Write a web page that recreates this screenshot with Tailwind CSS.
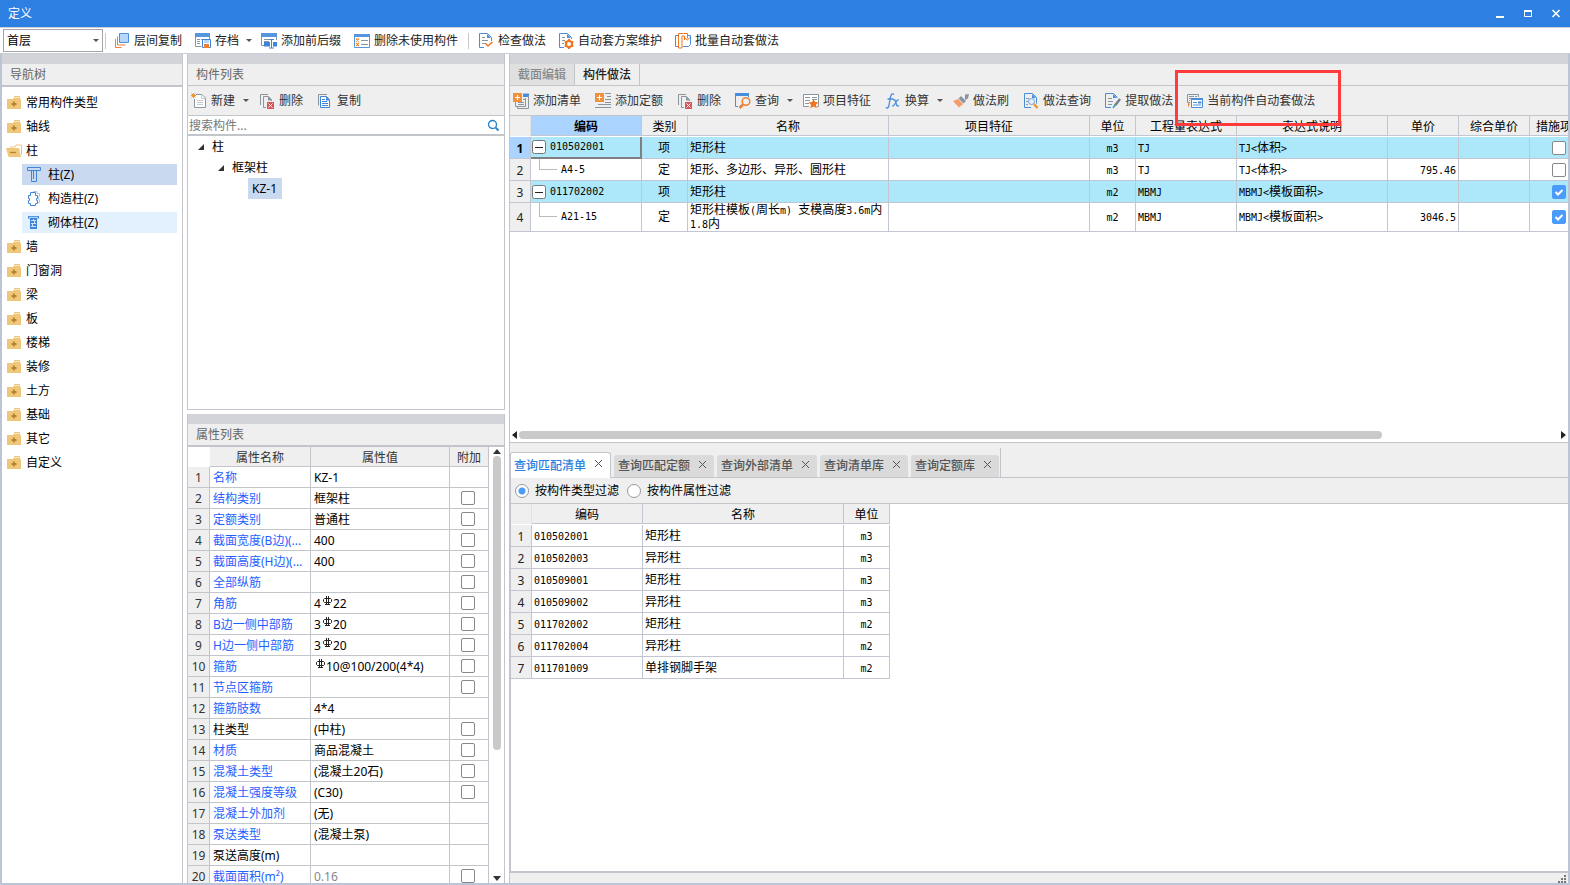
<!DOCTYPE html>
<html lang="zh-CN">
<head>
<meta charset="utf-8">
<title>定义</title>
<script src="https://cdn.jsdelivr.net/npm/@tailwindcss/browser@4"></script>
</head>
<body class="h-screen flex flex-col overflow-hidden bg-white text-black text-xs leading-4 font-['Noto_Sans','Noto_Sans_CJK_SC',sans-serif]">

<svg class="hidden" aria-hidden="true">
  <symbol id="i-floor" viewBox="0 0 16 16"><path d="M5.500 .5h9v9h-9z" fill="#b6d6fb" stroke="#4a90dc"/><path d="M3.500 3.500v8.500h8M1.500 6v8.500h6" fill="none" stroke="#ee7f35"/></symbol>
  <symbol id="i-save" viewBox="0 0 16 16"><path d="M0 0h15v4H0z" fill="#5596e0"/><path d="M.5 4v9.500h6M14.500 4v2" fill="none" stroke="#8b959d"/><path d="M2 6.500h3m1 0h6M2 8.500h3M2 10.500h3" stroke="#8b959d"/><path d="M7.500 6.500h8v8h-8z" fill="#fff" stroke="#3d85d8"/><path d="M9 7h5v3H9z" fill="#b8d4f6"/><path d="M9 11h5v4H9z" fill="#ee7f35"/></symbol>
  <symbol id="i-affix" viewBox="0 0 16 16"><path d="M0 0h16v4H0z" fill="#5596e0"/><path d="M.5 4v8.500H3M15.500 4v3" fill="none" stroke="#8b959d"/><path d="M3 6.500h5M3 8.500h5" stroke="#8b959d"/><path d="M3 9h6v4.500H3zm9 0h4v4.500h-4z" fill="#3d85d8"/><path d="M8 6.500h5M8 15h5M10.500 6.500v8.500" stroke="#3d85d8"/></symbol>
  <symbol id="i-unused" viewBox="0 0 16 16"><path d="M0 1h16v3H0z" fill="#5596e0"/><path d="M.5 3v11.500h15V3" fill="none" stroke="#5596e0"/><path d="M2 5.500l3 3m0-3l-3 3m0 1.500l3 3m0-3l-3 3" stroke="#f08b2c" stroke-width="1.200"/><path d="M7 7.500h7M7 11.500h7" stroke="#8b959d"/></symbol>
  <symbol id="i-check" viewBox="0 0 16 16"><path d="M6 14.500H1.500V.5h8l4 4V8" fill="none" stroke="#4a8edb"/><path d="M9 1v4h4z" fill="#4a8edb"/><path d="M4 4.500h3M4 7.500h6M4 10.500h4" stroke="#8b959d"/><path d="M7.500 10.500l2.500 2.500L14.500 9" fill="none" stroke="#ee7623" stroke-width="1.600"/></symbol>
  <symbol id="i-gear" viewBox="0 0 16 16"><path d="M6 14.500H1.500V.5h8l4 4V6" fill="none" stroke="#4a8edb"/><path d="M9 1v4h4z" fill="#4a8edb"/><path d="M4 4.500h3M4 7.500h3M4 10.500h2" stroke="#8b959d"/><circle cx="11" cy="11" r="3" fill="none" stroke="#ee7623" stroke-width="2"/><path d="M11 6v2m0 6v2M6.700 8.500l1.700 1m5.200 3l1.700 1M6.700 13.500l1.700-1m5.200-3l1.700-1" stroke="#ee7623" stroke-width="2"/></symbol>
  <symbol id="i-batch" viewBox="0 0 16 16"><path d="M3 2.500H.5v11H3M12 2.500h3.500v9l-2 2H8" fill="none" stroke="#4a8edb"/><path d="M8.500 .5H3.500v14.500h3.500v-12h2.500v4M8.500 .5h4v5M9.500 4.500l2.800 2.500 2.700-2.500" fill="none" stroke="#ee7623"/></symbol>
  <symbol id="i-new" viewBox="0 0 16 16"><path d="M5 1.500h6l3.500 3.500v9.500h-11V6" fill="#fff" stroke="#8b959d"/><path d="M10.500 1.500v4h4M6 7.500h6M6 9.500h6M6 11.500h6" fill="none" stroke="#c5cace"/><path d="M.5 .5l4 4m0-4l-4 4M2.500 0v5M0 2.500h5" stroke="#f0952e"/></symbol>
  <symbol id="i-del" viewBox="0 0 16 16"><path d="M1.500 12V1.500H9M7 14.500H4.500v-11h5l3 3V8" fill="none" stroke="#8b959d"/><path d="M9 3.500l4 4H9z" fill="#8b959d"/><path d="M8 9h7v7H8z" fill="#d9535b"/><path d="M9.500 10.500l4 4m0-4l-4 4" stroke="#fff"/></symbol>
  <symbol id="i-copy" viewBox="0 0 16 16"><path d="M1.500 12.500V1.500H10" fill="none" stroke="#8b959d"/><path d="M3.500 3.500h6l3 3v8h-9z" fill="#fff" stroke="#3f86d8"/><path d="M9 3.500v4h4z" fill="#3f86d8"/><path d="M5 6.500h3M5 8.500h5M5 10.500h6M5 12.500h6" stroke="#3f86d8"/></symbol>
  <symbol id="i-addlist" viewBox="0 0 16 16"><path d="M10 .5h6V4h-6z" fill="#4a8edb"/><path d="M15.500 3v12.500H4.500v-2M2.500 9v4.500h10V5" fill="none" stroke="#8b959d"/><path d="M10 6.500h2M5 9.500h6M5 11.500h6" stroke="#8b959d"/><path d="M0 0h9v9H0z" fill="#ee9240"/><path d="M2 4.500h5M4.500 2v5" stroke="#fff"/></symbol>
  <symbol id="i-addquota" viewBox="0 0 16 16"><path d="M10 .5h6M12 3.500h4M10 6.500h6M10 9.500h6M3 11.500h13M0 14.500h16" stroke="#8b959d"/><path d="M0 0h9v9H0z" fill="#ee9240"/><path d="M2 4.500h5M4.500 2v5" stroke="#fff"/></symbol>
  <symbol id="i-query" viewBox="0 0 16 16"><path d="M0 0h14v3H0z" fill="#4a8edb"/><path d="M.5 3v10.500H3M13.500 2v2" fill="none" stroke="#4a8edb"/><circle cx="11" cy="8.500" r="3.800" fill="#f1f1f1" stroke="#ee7f35" stroke-width="1.500"/><path d="M8 11.500L4.500 15" stroke="#ee7f35" stroke-width="2.500"/></symbol>
  <symbol id="i-feature" viewBox="0 0 16 16"><path d="M6 13.500H.5v-12h15v12H14" fill="#fff" stroke="#8b959d"/><path d="M2 4.500h5M9 4.500h5M2 7.500h5M2 10.500h4M9 6.500h5" stroke="#8b959d"/><path d="M10.500 6l1.500 3 3.500.3-2.500 2.400.8 3.500-3.300-1.800-3.200 1.800.7-3.500L5.500 9.300 9 9z" fill="#ee7623"/></symbol>
  <symbol id="i-fx" viewBox="0 0 16 16"><path d="M9 1.500Q6.500-.5 5.500 4L3.800 13Q3 16 .8 14.500M2.500 6h6M8 7q2-1 2.500 1.500l1 3q.5 2.500 2.500 1M13.800 7q-1.800-.5-3.300 3-1.500 3-3.300 3" fill="none" stroke="#4a8edb" stroke-width="1.300"/></symbol>
  <symbol id="i-brush" viewBox="0 0 16 16"><path d="M12 1.500l4-.5-1 4.500-3 1.500zM8 3l5 5-2.500 2.500-5-5z" fill="#8b959d"/><path d="M5 6l5 5-4 3.500L0 8z" fill="#f59a6a"/></symbol>
  <symbol id="i-docquery" viewBox="0 0 16 16"><path d="M8 14.500H1.500V.5h8l4 4v6" fill="none" stroke="#4a8edb"/><path d="M9 1v4h4z" fill="#4a8edb"/><path d="M3 5.500h3M3 8.500h2M3 11.500h2" stroke="#8b959d"/><circle cx="8.500" cy="8.500" r="3" fill="#e8effa" stroke="#6f9fdd"/><path d="M11 11l3.500 4" stroke="#ee9a2f" stroke-width="2.500"/></symbol>
  <symbol id="i-extract" viewBox="0 0 16 16"><path d="M6 14.500H.5V.5h8l4 4" fill="none" stroke="#4a8edb"/><path d="M8 1v4h4z" fill="#4a8edb"/><path d="M3 5.500h4M3 8.500h5M3 11.500h4" stroke="#8b959d"/><path d="M15 6l-5 6.500" stroke="#73808a" stroke-width="2.500"/><path d="M10 12l-2 3" stroke="#39a2b5" stroke-width="1.500"/></symbol>
  <symbol id="i-auto" viewBox="0 0 16 16"><path d="M3 9.500H.5v-8h11V4M2 3.500h5M8 3.500h2M2 5.500h2M2 7.500h1" fill="none" stroke="#8b959d"/><path d="M1.500 10.500v3M1 11h2" stroke="#ee7f35"/><path d="M4.500 5.500h11v9h-11z" fill="#fff" stroke="#4a8edb"/><path d="M4 5h12v2H4z" fill="#4a8edb"/><path d="M6 9.500h4M6 12h8" stroke="#4a8edb"/><path d="M11 8.500h3.500v2H11z" fill="#4a8edb"/></symbol>
  <symbol id="i-folder" viewBox="0 0 16 16"><path d="M8 1h6v1H8zM1 4h6l1-1.500h6V4h1v10H1z" fill="#efc77c"/><path d="M8 6.500v5M5.500 9h5" stroke="#b5852b" stroke-width="1.800"/></symbol>
  <symbol id="i-folder-open" viewBox="0 0 16 16"><path d="M4 4h5l1-2h5.500v10" fill="none" stroke="#efc77c"/><path d="M0 5h13l2 9H2.500z" fill="#efc77c"/><path d="M4 9.500h6" stroke="#b5852b" stroke-width="1.300"/></symbol>
  <symbol id="i-col" viewBox="0 0 16 16"><path d="M1.500 .5h13v3h-13zM5.500 3.500v11h5v-11M7.500 3.500v8.500" fill="none" stroke="#3f86d8"/></symbol>
  <symbol id="i-gz" viewBox="0 0 16 16"><path d="M7 .5h4v2h2.500v3h-1v3h1v3H11" fill="none" stroke="#a9cbf2"/><path d="M4.500 1.500h5v3h2v3h-1v2h1v3h-2v2h-5v-2h-2v-3h1v-2h-1v-3h2z" fill="#fff" stroke="#3f86d8"/></symbol>
  <symbol id="i-qt" viewBox="0 0 16 16"><path d="M2 1h11v2.500H2zM4 3h7v11H4z" fill="#3f86d8"/><path d="M3 2.300h9M5 5.500h5M5 8.500h5M5 11.500h5M7.500 4v1M8.500 6v2M6.500 9v2" stroke="#cfe2f8"/></symbol>
  <symbol id="i-rebar" viewBox="0 0 10 11"><path d="M4.500 0v8M6.500 0v8M3 2.500h5.500l1 1v2l-1 1H2.500l-1-1v-2l1-1zM3 8.500h5" fill="none" stroke="#222"/></symbol>
</svg>

<!-- Title bar -->
<header class="h-[27px] shrink-0 flex items-center bg-[#2d80e2] text-white pl-2 pr-[6px]">
  <h1 class="flex-1">定义</h1>
  <div class="flex gap-3">
    <button aria-label="最小化" class="w-4 h-4 flex justify-center items-center"><svg class="w-4 h-4" viewBox="0 0 16 16"><path d="M4 11h8" stroke="#fff" stroke-width="2"/></svg></button>
    <button aria-label="最大化" class="w-4 h-4 flex justify-center items-center"><svg class="w-4 h-4" viewBox="0 0 16 16"><path d="M4 5h8" stroke="#fff" stroke-width="2"/><path d="M4.500 5v5.500h7V5" fill="none" stroke="#fff"/></svg></button>
    <button aria-label="关闭" class="w-4 h-4 flex justify-center items-center"><svg class="w-4 h-4" viewBox="0 0 16 16"><path d="M4.500 4l7 7M11.500 4l-7 7" stroke="#fff" stroke-width="1.500"/></svg></button>
  </div>
</header>

<!-- Main toolbar -->
<div class="h-[27px] shrink-0 flex items-center border-y border-[#c9cdd6] pl-[3px] text-[#222]">
  <div class="relative w-[100px] h-[23px]">
    <select aria-label="楼层" class="appearance-none w-full h-full border border-[#a5a5a5] bg-white pl-[3px] outline-none text-black"><option>首层</option></select>
    <svg class="absolute right-1 top-[10px] w-[6px] h-[3px]" viewBox="0 0 6 3"><path d="M0 0h6L3 3z" fill="#555"/></svg>
  </div>
  <span class="w-px h-4 bg-[#c8c8c8] mx-[2px]"></span>
  <button class="flex items-center gap-1 px-[6px] mr-px h-5"><svg class="w-4 h-4"><use href="#i-floor"/></svg>层间复制</button>
  <button class="flex items-center gap-1 pl-[6px] pr-[3px] h-5"><svg class="w-4 h-4"><use href="#i-save"/></svg>存档<svg class="ml-[3px] w-[6px] h-[3px]" viewBox="0 0 6 3"><path d="M0 0h6L3 3z" fill="#555"/></svg></button>
  <button class="flex items-center gap-1 px-[6px] mr-px h-5"><svg class="w-4 h-4"><use href="#i-affix"/></svg>添加前后缀</button>
  <button class="flex items-center gap-1 px-[6px] h-5"><svg class="w-4 h-4"><use href="#i-unused"/></svg>删除未使用构件</button>
  <span class="w-px h-4 bg-[#c8c8c8] ml-1 mr-[3px]"></span>
  <button class="flex items-center gap-1 px-[6px] h-5"><svg class="w-4 h-4"><use href="#i-check"/></svg>检查做法</button>
  <button class="flex items-center gap-1 px-[6px] mr-px h-5"><svg class="w-4 h-4"><use href="#i-gear"/></svg>自动套方案维护</button>
  <button class="flex items-center gap-1 px-[6px] h-5"><svg class="w-4 h-4"><use href="#i-batch"/></svg>批量自动套做法</button>
</div>

<main class="flex-1 min-h-0 flex gap-1 border-l-2 border-b-2 border-r-2 border-[#bcc5d5]">

  <!-- Navigation tree -->
  <nav class="w-[181px] shrink-0 flex flex-col border-r border-[#c2c5cc]" aria-label="导航树">
    <div class="h-[10px] bg-[#d3d4da]"></div>
    <h2 class="h-[23px] flex items-center px-2 bg-[#efefef] border-b-2 border-[#c2c6ca] text-[#666]">导航树</h2>
    <ul id="nav" class="flex-1 pt-1"></ul>
  </nav>

  <!-- Component and property lists -->
  <div class="w-[318px] shrink-0 flex flex-col gap-1">
    <section class="h-[356px] flex flex-col border-x border-b border-[#c2c5cc]">
      <div class="h-[10px] shrink-0 bg-[#d3d4da]"></div>
      <h2 class="h-[22px] shrink-0 flex items-center px-2 bg-[#efefef] border-b border-[#c2c6ca] text-[#666]">构件列表</h2>
      <div class="h-[30px] shrink-0 flex items-center bg-[#efefef] border-b border-[#c2c6ca] text-[#333] pl-[3px]">
        <button class="flex items-center gap-1 mr-[10px]"><svg class="w-4 h-4"><use href="#i-new"/></svg>新建<svg class="ml-1 w-[6px] h-[3px]" viewBox="0 0 6 3"><path d="M0 0h6L3 3z" fill="#555"/></svg></button>
        <button class="flex items-center gap-1 mr-[14px]"><svg class="w-4 h-4"><use href="#i-del"/></svg>删除</button>
        <button class="flex items-center gap-1"><svg class="w-4 h-4"><use href="#i-copy"/></svg>复制</button>
      </div>
      <div class="h-5 shrink-0 flex items-center border-b-2 border-[#c2c6ca] pl-px pr-1 pt-px">
        <input aria-label="搜索构件" placeholder="搜索构件..." class="flex-1 min-w-0 h-4 outline-none placeholder:text-[#777]">
        <button aria-label="搜索"><svg class="w-[13px] h-[13px]" viewBox="0 0 13 13"><circle cx="5.500" cy="5.500" r="4" fill="none" stroke="#2682c8" stroke-width="1.300"/><path d="M8.500 8.500l3 3" stroke="#2682c8" stroke-width="1.800"/></svg></button>
      </div>
      <ul>
        <li class="h-[21px] flex items-center gap-2 pl-[10px]"><svg class="w-[6px] h-[6px]" viewBox="0 0 6 6"><path d="M6 0v6H0z" fill="#333"/></svg>柱</li>
        <li class="h-[21px] flex items-center gap-2 pl-[30px]"><svg class="w-[6px] h-[6px]" viewBox="0 0 6 6"><path d="M6 0v6H0z" fill="#333"/></svg>框架柱</li>
        <li class="h-[21px] flex pl-[60px]"><span class="bg-[#c9daf0] pl-1 pr-[5px] flex items-center">KZ-1</span></li>
      </ul>
    </section>
    <section class="flex-1 min-h-0 flex flex-col border-x border-[#c2c5cc]">
      <div class="h-[10px] shrink-0 bg-[#d3d4da]"></div>
      <h2 class="h-[23px] shrink-0 flex items-center px-2 bg-[#efefef] border-b-2 border-[#c2c6ca] text-[#666]">属性列表</h2>
      <div class="flex-1 min-h-0 flex overflow-hidden">
        <table class="w-[301px] table-fixed border-separate border-spacing-0 self-start">
          <colgroup><col class="w-[22px]"><col class="w-[101px]"><col class="w-[139px]"><col class="w-[39px]"></colgroup>
          <thead class="text-[#333]"><tr class="h-5">
            <th class="p-0"></th>
            <th class="p-0 pt-[2px] font-normal bg-[#efefef] border-r border-b border-[#c2c6ca]">属性名称</th>
            <th class="p-0 pt-[2px] font-normal bg-[#efefef] border-r border-b border-[#c2c6ca]">属性值</th>
            <th class="p-0 pt-[2px] font-normal bg-[#efefef] border-r border-b border-[#c2c6ca]">附加</th>
          </tr></thead>
          <tbody id="props"></tbody>
        </table>
        <div class="flex-1 flex flex-col items-center py-[2px]">
          <svg class="w-2 h-[5px] shrink-0" viewBox="0 0 8 5"><path d="M0 5h8L4 0z" fill="#333"/></svg>
          <div class="w-2 h-[294px] mt-[2px] rounded-full bg-[#c9c9c9]"></div>
          <svg class="w-2 h-[5px] shrink-0 mt-auto" viewBox="0 0 8 5"><path d="M0 0h8L4 5z" fill="#333"/></svg>
        </div>
      </div>
    </section>
  </div>

  <!-- Work area -->
  <div class="flex-1 min-w-0 flex flex-col border-l border-[#c2c5cc]">
    <div class="h-[10px] shrink-0 bg-[#d3d4da]"></div>
    <div class="h-[22px] shrink-0 flex bg-[#efefef] border-b border-[#c2c6ca]" role="tablist">
      <button role="tab" class="w-[65px] bg-[#e0e0e0] text-[#888] font-medium border-r border-[#c2c6ca]">截面编辑</button>
      <button role="tab" aria-selected="true" class="w-[65px] font-medium text-[#222] border-r border-[#c2c6ca]">构件做法</button>
    </div>
    <div class="h-[30px] shrink-0 flex items-center bg-[#efefef] border-b border-[#c2c6ca] text-[#333] pl-[3px] whitespace-nowrap">
      <button class="flex items-center gap-1 mr-[14px]"><svg class="w-4 h-4"><use href="#i-addlist"/></svg>添加清单</button>
      <button class="flex items-center gap-1 mr-[14px]"><svg class="w-4 h-4"><use href="#i-addquota"/></svg>添加定额</button>
      <button class="flex items-center gap-1 mr-[14px]"><svg class="w-4 h-4"><use href="#i-del"/></svg>删除</button>
      <button class="flex items-center gap-1 mr-[10px]"><svg class="w-4 h-4"><use href="#i-query"/></svg>查询<svg class="ml-1 w-[6px] h-[3px]" viewBox="0 0 6 3"><path d="M0 0h6L3 3z" fill="#555"/></svg></button>
      <button class="flex items-center gap-1 mr-[14px]"><svg class="w-4 h-4"><use href="#i-feature"/></svg>项目特征</button>
      <button class="flex items-center gap-1 mr-[10px]"><svg class="w-4 h-4"><use href="#i-fx"/></svg>换算<svg class="ml-1 w-[6px] h-[3px]" viewBox="0 0 6 3"><path d="M0 0h6L3 3z" fill="#555"/></svg></button>
      <button class="flex items-center gap-1 mr-[14px]"><svg class="w-4 h-4"><use href="#i-brush"/></svg>做法刷</button>
      <button class="flex items-center gap-1 mr-[14px]"><svg class="w-4 h-4"><use href="#i-docquery"/></svg>做法查询</button>
      <button class="flex items-center gap-1 mr-[14px]"><svg class="w-4 h-4"><use href="#i-extract"/></svg>提取做法</button>
      <button class="relative flex items-center gap-1"><svg class="w-4 h-4"><use href="#i-auto"/></svg>当前构件自动套做法<span class="absolute z-10 -left-3 -top-[23px] w-[166px] h-14 border-3 border-[#ff3b3b]"></span></button>
    </div>

    <div class="h-[327px] shrink-0 flex flex-col border-b border-[#c2c6ca]">
      <div class="flex-1 min-h-0 overflow-hidden">
        <table class="w-[1078px] table-fixed border-separate border-spacing-0">
          <colgroup><col class="w-[21px]"><col class="w-[111px]"><col class="w-[46px]"><col class="w-[201px]"><col class="w-[201px]"><col class="w-[46px]"><col class="w-[101px]"><col class="w-[151px]"><col class="w-[71px]"><col class="w-[71px]"><col class="w-[58px]"></colgroup>
          <thead><tr class="h-5 bg-[#efefef]">
            <th class="p-0 border-r border-[#e2e2e2]"></th>
            <th class="p-0 pt-[2px] bg-[#aad4ff] border-b border-r border-[#c2c6d0]">编码</th>
            <th class="p-0 pt-[2px] font-normal border-b border-r border-[#c2c6d0]">类别</th>
            <th class="p-0 pt-[2px] font-normal border-b border-r border-[#c2c6d0]">名称</th>
            <th class="p-0 pt-[2px] font-normal border-b border-r border-[#c2c6d0]">项目特征</th>
            <th class="p-0 pt-[2px] font-normal border-b border-r border-[#c2c6d0]">单位</th>
            <th class="p-0 pt-[2px] font-normal border-b border-r border-[#c2c6d0]">工程量表达式</th>
            <th class="p-0 pt-[2px] font-normal border-b border-r border-[#c2c6d0]">表达式说明</th>
            <th class="p-0 pt-[2px] font-normal border-b border-r border-[#c2c6d0]">单价</th>
            <th class="p-0 pt-[2px] font-normal border-b border-r border-[#c2c6d0]">综合单价</th>
            <th class="p-0 pt-[2px] pl-[6px] text-left whitespace-nowrap font-normal border-b border-[#c2c6d0]">措施项目</th>
          </tr></thead>
          <tbody id="works"></tbody>
        </table>
      </div>
      <div class="h-[15px] shrink-0 flex items-center gap-[2px] px-[2px]">
        <svg class="w-[5px] h-2" viewBox="0 0 5 8"><path d="M5 0v8L0 4z" fill="#222"/></svg>
        <div class="flex-1"><div class="w-[83%] h-2 rounded-full bg-[#c9c9c9]"></div></div>
        <svg class="w-[5px] h-2" viewBox="0 0 5 8"><path d="M0 0v8l5-4z" fill="#222"/></svg>
      </div>
    </div>

    <div class="h-[35px] shrink-0 flex bg-[#efefef] border-b border-[#c2c6ca]">
      <div class="flex items-end gap-[3px] pt-1 pr-px mt-[5px] border-r border-[#c2c6ca] text-[#555]" role="tablist" id="tabs"></div>
    </div>
    <div class="flex-1 min-h-0 flex flex-col border-l border-[#c2c5cc] border-b-2">
      <div class="h-[26px] shrink-0 flex items-center bg-[#efefef] border-b border-[#c2c6ca] pl-1">
        <label class="flex items-center gap-[6px]"><input type="radio" name="filter" checked class="appearance-none w-[14px] h-[14px] rounded-full border border-[#999] bg-white bg-[radial-gradient(circle,#4a9bfa_3px,transparent_4px)]">按构件类型过滤</label>
        <label class="flex items-center gap-[6px] ml-2"><input type="radio" name="filter" class="appearance-none w-[14px] h-[14px] rounded-full border border-[#999] bg-white">按构件属性过滤</label>
      </div>
      <table class="w-[379px] table-fixed border-separate border-spacing-0">
        <colgroup><col class="w-[21px]"><col class="w-[111px]"><col class="w-[201px]"><col class="w-[46px]"></colgroup>
        <thead><tr class="h-5 bg-[#efefef]">
          <th class="p-0 border-r border-[#e2e2e2]"></th>
          <th class="p-0 pt-[2px] font-normal border-b border-r border-[#c2c6d0]">编码</th>
          <th class="p-0 pt-[2px] font-normal border-b border-r border-[#c2c6d0]">名称</th>
          <th class="p-0 pt-[2px] font-normal border-b border-r border-[#c2c6d0]">单位</th>
        </tr></thead>
        <tbody id="matches"></tbody>
      </table>
    </div>
    <footer class="h-[10px] shrink-0 flex justify-end items-end bg-[#efefef] pr-[2px]">
      <svg class="w-2 h-2" viewBox="0 0 8 8"><path d="M6 0h2v2H6zM3 3h2v2H3zM6 3h2v2H6zM0 6h2v2H0zM3 6h2v2H3zM6 6h2v2H6z" fill="#777"/></svg>
    </footer>
  </div>
</main>

<script>
const $ = id => document.getElementById(id);
const box = (label, on) => `<input type="checkbox" aria-label="${label}" ${on ? 'checked' : ''} class="block mx-auto appearance-none w-[14px] h-[14px] rounded-[2px] border border-[#888] bg-white checked:border-[#4a9bfa] checked:bg-[#4a9bfa]">`;

const nav = ['常用构件类型', '轴线', '*柱', '墙', '门窗洞', '梁', '板', '楼梯', '装修', '土方', '基础', '其它', '自定义'];
const kids = [['i-col', '柱(Z)', 'bg-[#c9daf0]'], ['i-gz', '构造柱(Z)', ''], ['i-qt', '砌体柱(Z)', 'bg-[#e3f1fe]']];
$('nav').innerHTML = nav.map(n => {
  const open = n[0] === '*';
  return `<li><div class="h-6 flex items-center gap-1 pl-1"><svg class="w-4 h-4"><use href="#${open ? 'i-folder-open' : 'i-folder'}"/></svg>${n.replace('*', '')}</div>` +
    (open ? '<ul>' + kids.map(k => `<li class="h-6 pl-5 pr-[5px] pt-px"><a href="#" class="h-[21px] flex items-center gap-[6px] pl-1 ${k[2]}"><svg class="w-4 h-4"><use href="#${k[0]}"/></svg>${k[1]}</a></li>`).join('') + '</ul>' : '') + '</li>';
}).join('');

// name, value, has checkbox, name is black
const bar = '<svg class="inline-block w-[10px] h-[11px] mx-px align-[1px]"><use href="#i-rebar"/></svg>';
const props = [
  ['名称', 'KZ-1', 0], ['结构类别', '框架柱', 1], ['定额类别', '普通柱', 1], ['截面宽度(B边)(...', '400', 1], ['截面高度(H边)(...', '400', 1],
  ['全部纵筋', '', 1], ['角筋', '4' + bar + '22', 1], ['B边一侧中部筋', '3' + bar + '20', 1], ['H边一侧中部筋', '3' + bar + '20', 1],
  ['箍筋', bar + '10@100/200(4*4)', 1], ['节点区箍筋', '', 1], ['箍筋肢数', '4*4', 0], ['柱类型', '(中柱)', 1, 1], ['材质', '商品混凝土', 1],
  ['混凝土类型', '(混凝土20石)', 1], ['混凝土强度等级', '(C30)', 1], ['混凝土外加剂', '(无)', 0], ['泵送类型', '(混凝土泵)', 0],
  ['泵送高度(m)', '', 0, 1], ['截面面积(m²)', '<span class="text-[#888]">0.16</span>', 1]];
$('props').innerHTML = props.map((p, i) => `<tr class="h-[21px]">
  <td class="p-0 pt-[2px] text-center text-[#333] bg-[#efefef] border-r border-b border-[#c2c6ca]">${i + 1}</td>
  <td class="p-0 pt-[2px] pl-[3px] whitespace-nowrap border-r border-b border-[#c2c6ca] ${p[3] ? '' : 'text-[#1f5fff]'}">${p[0]}</td>
  <td class="p-0 pt-[2px] pl-[3px] whitespace-nowrap border-r border-b border-[#c2c6ca]">${p[1]}</td>
  <td class="p-0 pr-[2px] border-r border-b border-[#c2c6ca]">${p[2] ? box(p[0]) : ''}</td></tr>`).join('');

// Latin runs use a narrow fixed-width face
const m = s => s.replace(/[\x20-\x7e]+/g, t => `<span class="font-['DejaVu_Sans_Mono',monospace] text-[10px] leading-3">${t.replace('<', '&lt;').replace('>', '&gt;')}</span>`);
const works = [
  ['010502001', '项', '矩形柱', 'm3', 'TJ', 'TJ<体积>', '', 0],
  ['A4-5', '定', '矩形、多边形、异形、圆形柱', 'm3', 'TJ', 'TJ<体积>', '795.46', 0],
  ['011702002', '项', '矩形柱', 'm2', 'MBMJ', 'MBMJ<模板面积>', '', 1],
  ['A21-15', '定', '矩形柱模板(周长m) 支模高度3.6m内1.8内', 'm2', 'MBMJ', 'MBMJ<模板面积>', '3046.5', 1]];
$('works').innerHTML = '<tr class="h-px"><td class="p-0 h-px" colspan="11"></td></tr>' + works.map((w, i) => {
  const top = w[1] === '项';
  const code = top
    ? `<div class="flex items-center gap-1 pl-px"><svg class="w-[14px] h-[14px]" viewBox="0 0 14 14"><rect x=".5" y=".5" width="13" height="13" rx="2" fill="#fff" stroke="#777"/><path d="M3 7.500h8" stroke="#222"/></svg>${m(w[0])}</div>`
    : `<div class="flex items-center gap-1 pl-2 h-full"><span class="w-[18px] h-1/2 self-start border-l border-b border-[#bbb]"></span>${m(w[0])}</div>`;
  return `<tr class="${i === 3 ? 'h-[29px]' : 'h-[22px]'} ${top ? 'bg-[#ade8fa]' : ''}">
  <td class="p-0 pt-[2px] text-center border-r border-b border-[#c2c6d0] ${i === 0 ? 'font-bold bg-[#aad4ff]' : 'bg-[#efefef] text-[#222]'}">${i + 1}</td>
  <td class="p-0 ${i === 3 ? 'h-[29px]' : 'h-[22px]'} ${i === 0 ? 'border-r-2 border-b-2 border-[#808080]' : 'border-r border-b border-[#c2c6d0]'}">${code}</td>
  <td class="p-0 pr-px text-center border-r border-b border-[#c2c6d0]">${w[1]}</td>
  <td class="p-0 pl-[2px] border-r border-b border-[#c2c6d0] leading-[13px]">${m(w[2])}</td>
  <td class="p-0 border-r border-b border-[#c2c6d0]"></td>
  <td class="p-0 text-center border-r border-b border-[#c2c6d0]">${m(w[3])}</td>
  <td class="p-0 pl-[2px] border-r border-b border-[#c2c6d0]">${m(w[4])}</td>
  <td class="p-0 pl-[2px] border-r border-b border-[#c2c6d0]">${m(w[5])}</td>
  <td class="p-0 pr-[2px] text-right border-r border-b border-[#c2c6d0]">${m(w[6])}</td>
  <td class="p-0 border-r border-b border-[#c2c6d0]"></td>
  <td class="p-0 border-b border-[#c2c6d0]"><label class="relative block w-[14px] mx-auto">${box('措施项目 ' + (i + 1), w[7])}${w[7] ? '<svg class="absolute inset-0 w-[14px] h-[14px]" viewBox="0 0 14 14"><path d="M3.500 7l2.500 2.500L10.500 5" fill="none" stroke="#fff" stroke-width="2"/></svg>' : ''}</label></td></tr>`;
}).join('');

$('tabs').innerHTML = ['查询匹配清单', '查询匹配定额', '查询外部清单', '查询清单库', '查询定额库'].map((t, i) =>
  `<div class="flex items-center gap-2 ${i === 0 ? 'h-[26px] -mb-px pl-[3px] pr-[7px] bg-white text-[#2b80e0] border border-b-0 border-[#c2c6ca] rounded-t-[3px]' : 'h-[22px] pl-1 pr-[7px] bg-[#dadada] rounded-t-[3px]'}"><button role="tab" class="font-medium">${t}</button><button aria-label="关闭${t}"><svg class="w-[9px] h-[9px] mb-1" viewBox="0 0 9 9"><path d="M1 1l7 7M8 1L1 8" stroke="#555"/></svg></button></div>`).join('');

$('matches').innerHTML = '<tr class="h-px"><td class="p-0 h-px" colspan="4"></td></tr>' + [['010502001', '矩形柱', 'm3'], ['010502003', '异形柱', 'm3'], ['010509001', '矩形柱', 'm3'], ['010509002', '异形柱', 'm3'],
  ['011702002', '矩形柱', 'm2'], ['011702004', '异形柱', 'm2'], ['011701009', '单排钢脚手架', 'm2']].map((r, i) => `<tr class="h-[22px]">
  <td class="p-0 pt-[2px] text-center text-[#222] bg-[#efefef] border-r border-b border-[#c2c6d0]">${i + 1}</td>
  <td class="p-0 pl-[2px] border-r border-b border-[#c2c6d0]">${m(r[0])}</td>
  <td class="p-0 pl-[2px] border-r border-b border-[#c2c6d0]">${m(r[1])}</td>
  <td class="p-0 text-center border-r border-b border-[#c2c6d0]">${m(r[2])}</td></tr>`).join('');
</script>
</body>
</html>
